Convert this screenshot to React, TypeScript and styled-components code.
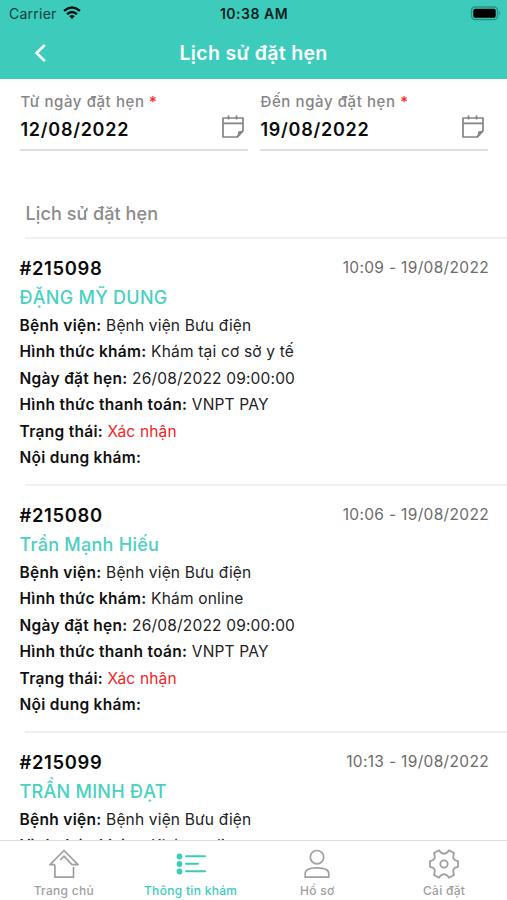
import React from 'react';
import styled, { createGlobalStyle } from 'styled-components';

const TEAL = '#3dccbc';

const GlobalStyle = createGlobalStyle`
  * { box-sizing: border-box; }
  body { margin: 0; background: #fff; }
`;

const Screen = styled.div`
  width: 507px;
  height: 900px;
  overflow: hidden;
  display: flex;
  flex-direction: column;
  background: #fff;
  color: #0c0c0c;
  font-family: Inter, 'Liberation Sans', sans-serif;
  white-space: nowrap;
`;

const Header = styled.header`
  flex: 0 0 79px;
  background: ${TEAL};
`;

const StatusBar = styled.div`
  height: 26px;
  display: grid;
  grid-template-columns: 1fr auto 1fr;
  align-items: center;
  padding: 0 6px 0 9px;
  color: #0b3d37;
  font-size: 14px;
`;

const Carrier = styled.div`
  display: flex;
  align-items: center;
  gap: 6px;
  letter-spacing: 0.25px;
`;

const Clock = styled.div`
  margin-right: 2px;
  font-weight: 600;
  letter-spacing: 0.5px;
  color: #04211d;
`;

const Battery = styled.svg`
  justify-self: end;
`;

const TitleBar = styled.div`
  height: 53px;
  display: grid;
  grid-template-columns: 80px 1fr 80px;
  align-items: center;
  justify-items: center;
`;

const Title = styled.h1`
  margin: 0;
  font-size: 19.5px;
  line-height: 50px;
  font-weight: 560;
  color: #fff;
  letter-spacing: 0.33px;
`;

const Filters = styled.section`
  flex: 0 0 72px;
  display: grid;
  grid-template-columns: 228px 228px;
  column-gap: 12px;
  padding: 12px 0 0 20px;
`;

const DateField = styled.div`
  height: 60px;
  padding-left: 0.5px;
  border-bottom: 2px solid #dedede;
`;

const FieldLabel = styled.div`
  font-size: 15px;
  line-height: 21px;
  font-weight: 500;
  letter-spacing: 0.59px;
  color: #858585;
`;

const Required = styled.span`
  color: #f22;
`;

const FieldValue = styled.div`
  display: flex;
  align-items: center;
  justify-content: space-between;
  height: 35px;
  padding-right: 3px;
  font-size: 18px;
  font-weight: 600;
  letter-spacing: 0.72px;

  svg {
    margin-bottom: 7px;
  }
`;

const SectionTitle = styled.h2`
  flex: 0 0 88px;
  margin: 0 0 0 25px;
  padding: 50px 0 0 0.5px;
  border-bottom: 2px solid #f0f0f0;
  font-size: 18px;
  line-height: 26px;
  font-weight: 530;
  letter-spacing: 0.1px;
  color: #8b8b8b;
`;

const List = styled.main`
  flex: 1;
  min-height: 0;
  overflow: hidden;
`;

const Card = styled.article`
  height: 247px;
  padding: 14px 18px 0 19.5px;
  display: flex;
  flex-direction: column;
`;

const CardHead = styled.div`
  display: flex;
  justify-content: space-between;
  align-items: center;
  height: 29px;
  margin-bottom: 1px;
`;

const Code = styled.div`
  font-size: 18.4px;
  line-height: 28px;
  font-weight: 600;
  letter-spacing: 0.65px;
`;

const Time = styled.div`
  font-size: 15.5px;
  letter-spacing: 0.33px;
  color: #6c6c6c;
`;

const Patient = styled.div`
  height: 30px;
  line-height: 30px;
  font-size: 18px;
  font-weight: 500;
  letter-spacing: 0.27px;
  color: #4bd0c1;
`;

const Line = styled.div<{ $alert?: boolean }>`
  height: 26.4px;
  line-height: 26.4px;
  font-size: 15.5px;
  letter-spacing: 0.18px;
  color: ${p => (p.$alert ? '#f32424' : '#222')};
`;

const Label = styled.b`
  font-weight: 600;
  letter-spacing: 0.3px;
  color: #111;
`;

const Divider = styled.div`
  margin: auto -18px 0 5.5px;
  height: 2px;
  background: #f0f0f0;
`;

const Tabs = styled.nav`
  flex: 0 0 60px;
  min-height: 0;
  display: grid;
  grid-template-columns: repeat(4, 1fr);
  border-top: 1px solid #dcdcdc;
  background: #fff;
`;

const Tab = styled.div<{ $active?: boolean }>`
  display: flex;
  flex-direction: column;
  align-items: center;
  gap: 2px;
  padding: 7px 0 0 1px;
  color: ${p => (p.$active ? TEAL : '#a0a0a0')};
  font-size: 12px;
  line-height: 18px;
  font-weight: 500;
  letter-spacing: 0.3px;
`;

const CalendarIcon = () => (
  <svg width="24" height="26" viewBox="0 0 24 26" fill="none" stroke="#848484" strokeWidth="1.7" strokeLinejoin="round">
    <path d="M2 5H22V18L16.5 24H2ZM2 10.3H22M7.5 2.5V6.5M15.5 2.5V6.5M22 18Q20.5 19 18 19Q18 22.5 16 24" />
  </svg>
);

const HomeIcon = () => (
  <svg width="32" height="32" viewBox="0 0 32 32" fill="none" stroke="currentColor" strokeWidth="1.7" strokeLinejoin="round">
    <path d="M6.9 16.7H2L16 2.5L30 16.7H24L16 8.2L12.3 12M6.9 16.7V29.2H25.5V19" />
  </svg>
);

const ListIcon = () => (
  <svg width="32" height="32" viewBox="0 0 32 32" fill="currentColor" stroke="currentColor" strokeWidth="2" strokeLinecap="round">
    <g stroke="none">
      <circle cx="4.5" cy="8.5" r="2.9" />
      <circle cx="4.5" cy="16" r="2.9" />
      <circle cx="4.5" cy="23.5" r="2.9" />
    </g>
    <path d="M11 8.2H30M11 15.7H23M11 23.2H30" />
  </svg>
);

const PersonIcon = () => (
  <svg width="32" height="32" viewBox="0 0 32 32" fill="none" stroke="currentColor" strokeWidth="1.7" strokeLinejoin="round">
    <circle cx="16" cy="9.2" r="6.7" />
    <path d="M4.2 29.2V25.5Q4.2 19.8 16 19.8T27.8 25.5V29.2Z" />
  </svg>
);

const GearIcon = () => (
  <svg width="32" height="32" viewBox="0 0 32 32" fill="none" stroke="currentColor" strokeWidth="1.8" strokeLinejoin="round">
    <circle cx="16" cy="16" r="3.7" />
    <path d="M11 2.2L12.3 4Q16 7.6 19.7 4L21 2.2L26 5L25.4 7.5Q24.4 12 28.8 12.8L30 13.2V18.8L28.8 19.2Q24.4 20 25.4 24.5L26 27L21 29.8L19.7 28Q16 24.4 12.3 28L11 29.8L6 27L6.6 24.5Q7.6 20 3.2 19.2L2 18.8V13.2L3.2 12.8Q7.6 12 6.6 7.5L6 5Z" />
  </svg>
);

const appointments = [
  { code: '#215098', time: '10:09 - 19/08/2022', name: 'ĐẶNG MỸ DUNG', kind: 'Khám tại cơ sở y tế' },
  { code: '#215080', time: '10:06 - 19/08/2022', name: 'Trần Mạnh Hiếu', kind: 'Khám online' },
  { code: '#215099', time: '10:13 - 19/08/2022', name: 'TRẦN MINH ĐẠT', kind: 'Khám online' },
];

const filters = [
  { label: 'Từ ngày đặt hẹn', value: '12/08/2022' },
  { label: 'Đến ngày đặt hẹn', value: '19/08/2022' },
];

export default function App() {
  return (
    <Screen>
      <GlobalStyle />
      <Header>
        <StatusBar>
          <Carrier>
            Carrier
            <svg width="18" height="14" viewBox="0 0 18 14" fill="none" stroke="#06110f" strokeWidth="2.4">
              <path d="M1 4.8Q9-2 17 4.8M4 8.1Q9 3.7 14 8.1" />
              <path d="M6.2 10.1Q9 7.8 11.8 10.1L9 13Z" fill="#06110f" stroke="none" />
            </svg>
          </Carrier>
          <Clock>10:38 AM</Clock>
          <Battery width="31" height="15" viewBox="0 0 31 15">
            <rect x="1.5" y="1" width="26" height="12.5" rx="3.5" fill="none" stroke="#279183" strokeWidth="1.4" />
            <rect x="3.3" y="2.8" width="22.4" height="9" rx="1.8" fill="#000" />
            <path d="M29 5Q31 7.2 29 9.4Z" fill="#279183" />
          </Battery>
        </StatusBar>
        <TitleBar>
          <svg width="14" height="20" viewBox="0 0 14 20" fill="none" stroke="#fff" strokeWidth="2.5">
            <path d="M11.8 2L3.5 10L11.8 18" />
          </svg>
          <Title>Lịch sử đặt hẹn</Title>
        </TitleBar>
      </Header>
      <Filters>
        {filters.map(f => (
          <DateField key={f.label}>
            <FieldLabel>{f.label} <Required>*</Required></FieldLabel>
            <FieldValue>{f.value}<CalendarIcon /></FieldValue>
          </DateField>
        ))}
      </Filters>
      <SectionTitle>Lịch sử đặt hẹn</SectionTitle>
      <List>
        {appointments.map(a => (
          <Card key={a.code}>
            <CardHead>
              <Code>{a.code}</Code>
              <Time>{a.time}</Time>
            </CardHead>
            <Patient>{a.name}</Patient>
            <Line><Label>Bệnh viện:</Label> Bệnh viện Bưu điện</Line>
            <Line><Label>Hình thức khám:</Label> {a.kind}</Line>
            <Line><Label>Ngày đặt hẹn:</Label> 26/08/2022 09:00:00</Line>
            <Line><Label>Hình thức thanh toán:</Label> VNPT PAY</Line>
            <Line $alert><Label>Trạng thái:</Label> Xác nhận</Line>
            <Line><Label>Nội dung khám:</Label></Line>
            <Divider />
          </Card>
        ))}
      </List>
      <Tabs>
        <Tab><HomeIcon />Trang chủ</Tab>
        <Tab $active><ListIcon />Thông tin khám</Tab>
        <Tab><PersonIcon />Hồ sơ</Tab>
        <Tab><GearIcon />Cài đặt</Tab>
      </Tabs>
    </Screen>
  );
}
